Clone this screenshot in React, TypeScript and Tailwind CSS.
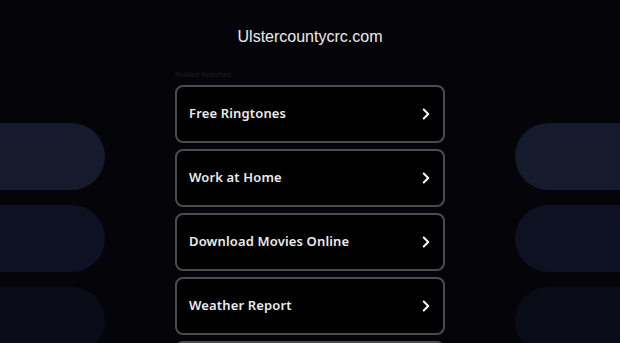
import { ChevronRight } from "lucide-react"

const links = [
  "Free Ringtones",
  "Work at Home",
  "Download Movies Online",
  "Weather Report",
  "Cheap Flights",
]

const pillColors = ["bg-[#151a2d]", "bg-[#0e1121]", "bg-[#090b17]"]

export default function App() {
  return (
    <div className="h-[343px] w-[620px] overflow-hidden bg-[#050509] flex justify-between">
      {/* left decor */}
      <div className="w-[105px] pt-[123px] flex flex-col gap-[15px]">
        {pillColors.map((c, i) => (
          <div key={i} className={`h-[67px] shrink-0 rounded-r-full ${c}`} />
        ))}
      </div>

      <div className="w-[270px] flex flex-col">
        <div
          className="pt-[27px] text-center text-[16px] leading-[20px] text-[#ececee]"
          style={{ fontFamily: '"Liberation Sans", Arial, sans-serif' }}
        >
          Ulstercountycrc.com
        </div>

        <div
          className="mt-[22px] h-[12px] text-[7px] leading-[12px] text-[#1c1c24]"
          style={{ fontFamily: '"Liberation Sans", Arial, sans-serif' }}
        >
          Related Searches
        </div>

        <div className="mt-[4px] flex flex-col gap-[6px]">
          {links.map((l) => (
            <div
              key={l}
              className="h-[58px] shrink-0 rounded-[8px] border-2 border-[#4b4b50] bg-black flex items-center justify-between pl-[12px] pr-[8px]"
            >
              <span
                className="text-[13px] font-semibold tracking-[0.15px] text-[#ececec]"
                style={{ fontFamily: '"Noto Sans", sans-serif' }}
              >
                {l}
              </span>
              <ChevronRight className="w-[18px] h-[18px] text-white" strokeWidth={2.6} />
            </div>
          ))}
        </div>
      </div>

      {/* right decor */}
      <div className="w-[105px] pt-[123px] flex flex-col gap-[15px]">
        {pillColors.map((c, i) => (
          <div key={i} className={`h-[67px] shrink-0 rounded-l-full ${c}`} />
        ))}
      </div>
    </div>
  )
}
